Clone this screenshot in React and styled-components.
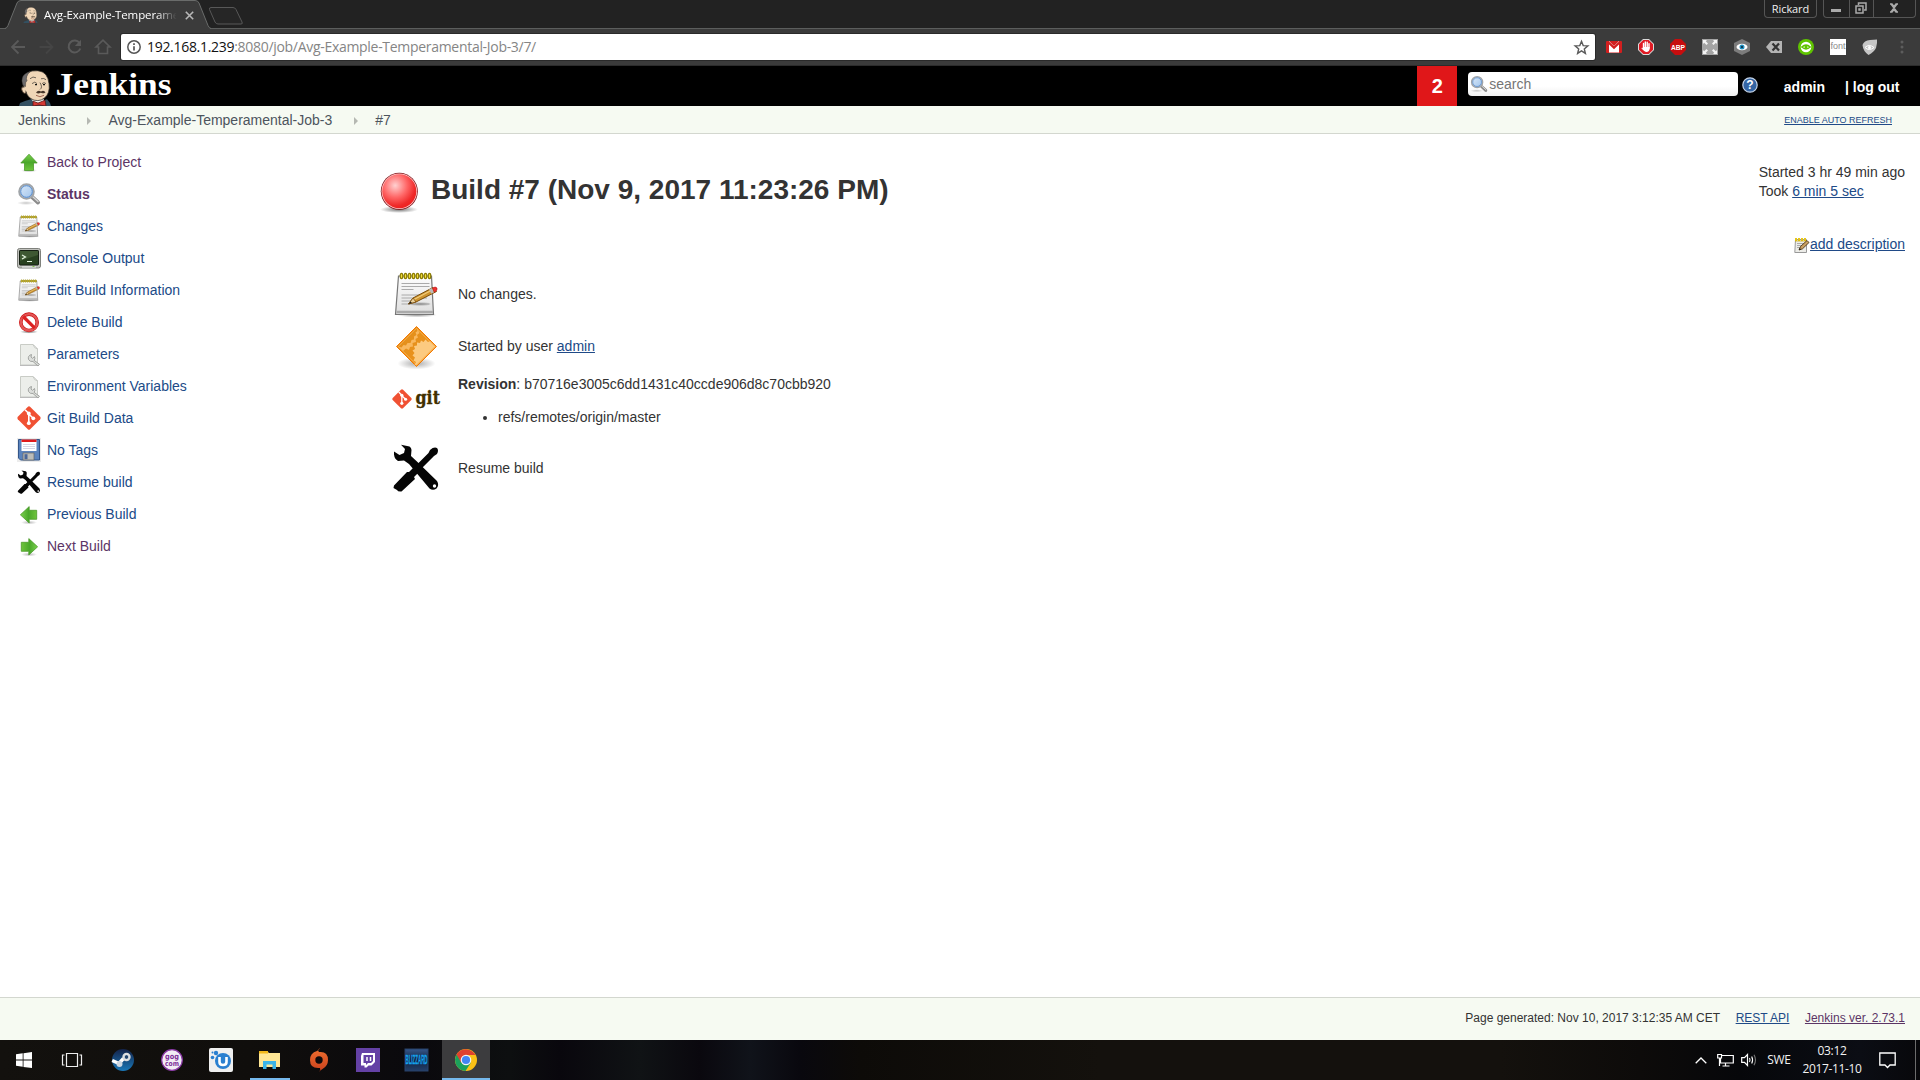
import React from "react";
import styled, { createGlobalStyle, css } from "styled-components";

const Global = createGlobalStyle`
  * { box-sizing: border-box; }
  body { margin: 0; background: #fff; overflow: hidden; }
  svg { display: block; flex: none; overflow: visible; }
`;

const uiFont = `"Open Sans", "Noto Sans", sans-serif`;
const pageFont = `"Liberation Sans", Arial, Helvetica, sans-serif`;

/* ---------- shell ---------- */

const Screen = styled.div`
  width: 1920px;
  height: 1080px;
  display: flex;
  flex-direction: column;
  background: #fff;
  color: #333;
  font: 14px ${pageFont};
`;

/* ---------- browser chrome ---------- */

const TabStrip = styled.div`
  height: 29px;
  flex: none;
  display: flex;
  align-items: flex-start;
  background: #222;
  border-bottom: 1px solid #5c5e5d;
`;
const Tab = styled.div`
  position: relative;
  width: 206px;
  height: 29px;
  margin-left: 5px;
  display: flex;
  align-items: center;
  padding: 1px 0 0 18px;
  color: #fff;
  font: 11.5px ${uiFont};
`;
const TabShape = styled.svg`
  position: absolute;
  left: 0;
  top: 0;
`;
const TabBody = styled.div`
  position: relative;
  display: flex;
  align-items: center;
`;
const TabTitle = styled.span`
  width: 134px;
  margin: 0 7px 0 6px;
  padding-bottom: 2px;
  white-space: nowrap;
  letter-spacing: -0.12px;
  mask-image: linear-gradient(90deg, #000 84%, transparent 99%);
`;
const NewTab = styled.svg`
  margin: 7px 0 0 -3px;
`;
const WindowControls = styled.div`
  display: flex;
  margin: 0 4px 0 auto;
  color: #f0f0f0;
`;
const ControlBox = styled.div`
  display: flex;
  height: 18px;
  border: 1px solid #555;
  border-top: 0;
  border-radius: 0 0 4px 4px;
  margin-left: ${(p) => p.$gap || 0}px;
`;
const UserName = styled.span`
  width: 51px;
  text-align: center;
  font: 11px/17px ${uiFont};
  letter-spacing: -0.1px;
`;
const ControlButton = styled.span`
  width: ${(p) => p.$w}px;
  display: flex;
  align-items: center;
  justify-content: center;
  padding: 0 1px 1px 0;
  & + & { border-left: 1px solid #555; }
`;
const Toolbar = styled.div`
  height: 37px;
  flex: none;
  display: flex;
  align-items: center;
  background: #3b3b3b;
  border-bottom: 1px solid #2c2c2c;
  padding: 0 10px 0 11px;
`;
const NavIcons = styled.div`
  display: flex;
  gap: 13px;
  width: 110px;
`;
const Omnibox = styled.div`
  width: 1474px;
  height: 26px;
  display: flex;
  align-items: center;
  background: #fff;
  border-radius: 2px;
  box-shadow: 0 0 0 1px #2a2a2a;
  padding: 0 6px 0 6px;
`;
const Url = styled.span`
  flex: 1;
  margin-left: 6px;
  color: #858585;
  font: 14px/20px ${uiFont};
  letter-spacing: -0.3px;
  b { font-weight: 400; color: #111; }
`;
const Extensions = styled.div`
  display: flex;
  align-items: center;
  gap: 16px;
  margin-left: 11px;
`;

/* ---------- Jenkins header ---------- */

const Header = styled.header`
  height: 40px;
  flex: none;
  display: flex;
  align-items: center;
  background: #000;
  padding: 0 20.5px 0 18px;
`;
const Alerts = styled.div`
  width: 40px;
  height: 40px;
  margin: 0 11px 0 auto;
  background: #e01719;
  color: #fff;
  font: bold 20px/40px ${pageFont};
  text-align: center;
`;
const SearchField = styled.div`
  width: 270px;
  height: 24px;
  margin-bottom: 4px;
  display: flex;
  align-items: center;
  gap: 1px;
  padding-left: 2px;
  border-radius: 4px;
  background: linear-gradient(#fff 60%, #f0f0f0);
  color: #757575;
`;
const Help = styled.div`
  margin: 0 25.5px 2px 4px;
`;
const Login = styled.div`
  display: flex;
  gap: 20px;
  padding-top: 2px;
  color: #fff;
  font-weight: bold;
`;

const Breadcrumbs = styled.nav`
  height: 28px;
  flex: none;
  display: flex;
  align-items: center;
  background: #f6faf2;
  border-bottom: 1px solid #d3d7cf;
  color: #4d545d;
  padding: 1px 28px 0 18px;
`;
const Crumb = styled.span`
  & + &::before {
    content: "";
    display: inline-block;
    margin: 0 17px 0 22px;
    border-left: 4px solid #b5b8b2;
    border-top: 4px solid transparent;
    border-bottom: 4px solid transparent;
  }
`;
const AutoRefresh = styled.a`
  margin-left: auto;
  color: #204a87;
  font-size: 9px;
  text-decoration: underline;
`;

/* ---------- page ---------- */

const Page = styled.div`
  flex: 1;
  display: flex;
  align-items: flex-start;
`;
const Tasks = styled.aside`
  width: 375px;
  padding: 12px 0 0 17px;
`;
const Task = styled.a`
  height: 32px;
  display: flex;
  align-items: center;
  gap: 6px;
  color: ${(p) => (p.$visited ? "#5c3566" : "#204a87")};
  font-weight: ${(p) => (p.$current ? "bold" : "normal")};
`;
const Main = styled.main`
  flex: 1;
  padding-top: 33px;
`;
const Title = styled.h1`
  margin: 0 0 55px;
  height: 48px;
  display: flex;
  align-items: center;
  gap: 8px;
  font: bold 28px ${pageFont};
  span { padding-bottom: 2px; }
`;
const Summary = styled.div`
  display: flex;
  flex-direction: column;
  gap: 4px;
  padding-left: 17px;
`;
const SummaryRow = styled.div`
  display: flex;
  gap: 18px;
  ${(p) =>
    p.$tall
      ? css`align-items: flex-start; height: 66px; padding-top: 1px; line-height: 18px;`
      : css`align-items: center; height: 48px;`}
`;
const Link = styled.a`
  color: ${(p) => (p.$visited ? "#5c3566" : "#204a87")};
  text-decoration: underline;
`;
const RefList = styled.ul`
  margin: 15px 0 0;
  padding-left: 40px;
`;
const Aside = styled.div`
  padding: 29px 15px 0 0;
  line-height: 19px;
`;
const AddDescription = styled.div`
  display: flex;
  justify-content: flex-end;
  align-items: center;
  margin-top: 34px;
`;
const Footer = styled.footer`
  height: 43px;
  flex: none;
  display: flex;
  justify-content: flex-end;
  align-items: center;
  gap: 15.5px;
  padding: 0 15px 2px 0;
  background: #f6faf2;
  border-top: 1px solid #d3d7cf;
  font-size: 12px;
`;

/* ---------- taskbar ---------- */

const Taskbar = styled.div`
  height: 40px;
  flex: none;
  display: flex;
  background: linear-gradient(90deg, #13110e 0, #100e0c 250px, #0a090d 420px, #0d0f10 510px, #09070d 560px, #101315 640px, #0a080e 700px, #10131a 750px, #09080e 800px, #0d0b08 860px, #14110d 1100px, #14110d 1500px, #0d0b0a 1640px, #06070a 1740px, #0b0d14 1860px, #08080b 100%);
`;
const AppButton = styled.div`
  width: ${(p) => p.$w || 49}px;
  height: 40px;
  display: flex;
  align-items: center;
  justify-content: center;
  position: relative;
  background: ${(p) => (p.$active ? "#3c3c3e" : "transparent")};
  &::after {
    content: "";
    display: ${(p) => (p.$open ? "block" : "none")};
    position: absolute;
    bottom: 0;
    left: ${(p) => (p.$active ? 0 : 2)}px;
    right: ${(p) => (p.$active ? 0 : 2)}px;
    height: 2px;
    background: #76b9ed;
  }
`;
const Tray = styled.div`
  margin-left: auto;
  display: flex;
  align-items: center;
  color: #f2f2f2;
  font: 12px/18px ${uiFont};
  letter-spacing: -0.35px;
`;
const TraySlot = styled.div`
  width: ${(p) => p.$w}px;
  text-align: center;
  display: flex;
  justify-content: center;
`;
const Clock = styled.div`
  width: 60px;
  margin-left: 5px;
  white-space: nowrap;
  text-align: center;
  line-height: 18px;
`;
const ActionCenter = styled.div`
  width: 53px;
  padding-left: 17px;
`;
const ShowDesktop = styled.div`
  width: 5px;
  height: 40px;
  border-left: 1px solid #6c6c6c;
`;

/* ---------- drawings ---------- */

const Butler = ({ w, h }) => (
  <svg width={w} height={h} viewBox="0 0 34 37" preserveAspectRatio="none">
    <path d="M1 37 L2 34 Q8 31 13 30 L20 33 L29 30 L32 34 L33 37Z" fill="#335061" />
    <path d="M13 29 L17 36 L25 36 L26 30Z" fill="#f7f7f7" />
    <path d="M6 18 Q2 4 14 1 Q27 -1 30 9 Q33 20 29 26 Q24 33 16 31 Q9 28 8 22 Q4 22 4 18Z" fill="#f0d6b7" stroke="#36312c" strokeWidth=".8" />
    <path d="M5 16 Q1 5 12 1.5 Q7 7 9 11 Q7 12 7.500 17Z" fill="#6d6b6d" stroke="#36312c" strokeWidth=".5" />
    <path d="M5 17 Q2 19 5 23 Q7 25 8 23" fill="#f0d6b7" stroke="#49372a" strokeWidth=".8" />
    <path d="M12 9 Q15 6 18 8 M23 9 Q26 8 28 10 M14 14 Q17 11 19 14 M24 14 Q26 12 28 14 M22 13 Q25 18 22 20" fill="none" stroke="#36312c" strokeWidth=".7" />
    <path d="M17 15h2 M25 15h2" stroke="#111" strokeWidth="1.100" />
    <path d="M18 23 Q20 20.500 23 22 Q26 20.500 27.500 23 Q25 24.500 22.500 23.500 Q20 25 18 23Z" fill="#49372a" />
    <path d="M18 26 Q22 29 26 26" stroke="#8e4b3a" fill="none" strokeWidth=".8" />
    <path d="M15 32 L20 34 L27 31 L28 37 L21 36 L15 37Z" fill="#d33833" stroke="#5b1614" strokeWidth=".8" />
  </svg>
);

const JenkinsLogo = () => (
  <svg width="156" height="40" viewBox="0 0 156 40">
    <g transform="translate(0 4)"><Butler w={34} h={36} /></g>
    <text x="37.500" y="28.500" fill="#fff" fontFamily="'Liberation Serif', Georgia, serif" fontWeight="bold" fontSize="30.500" textLength="116" lengthAdjust="spacingAndGlyphs">Jenkins</text>
  </svg>
);

const Defs = () => (
  <svg width="0" height="0" style={{ position: "absolute" }}>
    <defs>
      <radialGradient id="ball" cx=".38" cy=".33" r=".7">
        <stop offset="0" stopColor="#ffd0d0" /><stop offset=".5" stopColor="#f66" /><stop offset=".85" stopColor="#ef2929" /><stop offset="1" stopColor="#ef2020" />
      </radialGradient>
      <radialGradient id="shade"><stop offset="0" stopColor="#000" stopOpacity=".55" /><stop offset="1" stopColor="#000" stopOpacity="0" /></radialGradient>
      <linearGradient id="green" x2="0" y2="1"><stop offset="0" stopColor="#7bd14e" /><stop offset=".5" stopColor="#4aa82a" /><stop offset="1" stopColor="#6fc43c" /></linearGradient>
      <linearGradient id="paper" x2="0" y2="1"><stop offset="0" stopColor="#fdfdfd" /><stop offset="1" stopColor="#dedede" /></linearGradient>
      <linearGradient id="lens" x2="1" y2="1"><stop offset="0" stopColor="#dcebfa" /><stop offset="1" stopColor="#9dc1ea" /></linearGradient>
      <linearGradient id="orange" x2="1" y2="1"><stop offset="0" stopColor="#e08e1b" /><stop offset="1" stopColor="#f0951e" /></linearGradient>
      <linearGradient id="steam" x2="0" y2="1"><stop offset="0" stopColor="#14234a" /><stop offset="1" stopColor="#1a78b8" /></linearGradient>
      <linearGradient id="origin" x2="0" y2="1"><stop offset="0" stopColor="#f07030" /><stop offset="1" stopColor="#c8401c" /></linearGradient>
      <linearGradient id="bliz" x2="0" y2="1"><stop offset="0" stopColor="#35588c" /><stop offset=".5" stopColor="#12233f" /><stop offset="1" stopColor="#24406b" /></linearGradient>
    </defs>
  </svg>
);

const Arrow = ({ turn }) => (
  <svg width="24" height="24" viewBox="0 0 24 24">
    <ellipse cx="12" cy="20.500" rx="8" ry="2" fill="url(#shade)" opacity=".5" />
    <path d="M12 4.200 L20.200 13 H16.500 V20.500 H7.500 V13 H3.800Z" fill="url(#green)" stroke="#4b9a2a" strokeWidth=".8" transform={`rotate(${turn} 12 12.8)`} />
  </svg>
);

const Magnifier = ({ size = 24 }) => (
  <svg width={size} height={size} viewBox="0 0 24 24">
    <ellipse cx="9" cy="21" rx="9" ry="2" fill="url(#shade)" opacity=".4" />
    <path d="M14 14 L21 20.500" stroke="#8b8b8b" strokeWidth="4" strokeLinecap="round" />
    <path d="M15.500 14.500 L21 19.500" stroke="#d8d8d8" strokeWidth="1.300" strokeLinecap="round" />
    <circle cx="9.500" cy="9.500" r="7.300" fill="url(#lens)" stroke="#a0a4a8" strokeWidth="2" />
    <circle cx="9.500" cy="9.500" r="5.800" fill="none" stroke="#4d86cc" strokeWidth=".9" />
  </svg>
);

const Notebook = ({ size = 24 }) => (
  <svg width={size} height={size} viewBox="-1 0 48 48">
    <ellipse cx="24" cy="45" rx="20" ry="2.500" fill="url(#shade)" opacity=".7" />
    <path d="M5.500 6 H38.500 L40.500 44.500 H2.500Z" fill="url(#paper)" stroke="#777" strokeWidth="1.200" />
    <path d="M3.500 42 H40" stroke="#aaa" strokeWidth="2.500" />
    <path d="M8.500 13.500H36.500 M8.500 16.500H36.500 M8.500 19.500H20.500 M8.500 25H36 M8.500 28H34 M8.500 31H20 M8.500 34H36.500" stroke="#aaa" strokeWidth="1" />
    {[0, 1, 2, 3, 4, 5, 6, 7].map((i) => (
      <ellipse key={i} cx={8.5 + i * 4} cy="6" rx="1.300" ry="2.700" fill="#f6e03a" stroke="#8a7a00" strokeWidth="1.200" />
    ))}
    <ellipse cx="27" cy="34" rx="12" ry="2.500" fill="url(#shade)" opacity=".5" />
    <path d="M15.500 34 L20 28 L40 17.500 L43.500 21.500 L23 32Z" fill="#cf9530" stroke="#7a4d0b" strokeWidth="1" />
    <path d="M20 30 L39 20" stroke="#f2cd7c" strokeWidth="1.300" />
    <path d="M15.500 34 L20 28 L23 32Z" fill="#e9cf9a" stroke="#7a4d0b" strokeWidth=".8" />
    <path d="M15.500 34 L17.500 31.500 L19 33Z" fill="#222" />
    <path d="M36 19.500 L39 18 L41 22.300 L38.500 23.700Z" fill="#bbb" />
    <path d="M39.500 18 Q42.500 16 44 18 Q45 20.500 41.200 22.300Z" fill="#e33" stroke="#a11" strokeWidth=".5" />
  </svg>
);

const NotePad = () => (
  <svg width="16" height="16" viewBox="0 0 16 16">
    <path d="M1.500 2.500H12.500V15.500H.8Z" fill="#ecece8" stroke="#999" />
    <path d="M3 6.500h8M3 8.500h5M3 10.500h4" stroke="#aaa" />
    <path d="M1 1h2v3h-2zM4 1h2v3h-2zM7 1h2v3h-2zM10 1h2v3h-2z" fill="#e6c619" />
    <path d="M1 4 H13" stroke="#c9a800" strokeWidth=".7" />
    <path d="M5 13 L6.500 9.500 L13 3.500 L15 5.500 L8.500 11.800Z" fill="#c9a063" stroke="#4b3413" strokeWidth=".9" />
    <path d="M5 13l.7-1.800 1.300 1z" fill="#111" />
  </svg>
);

const Terminal = () => (
  <svg width="24" height="24" viewBox="0 0 24 24">
    <rect x=".5" y="2.500" width="23" height="19.500" rx="2" fill="#c0c1bd" stroke="#7f817c" />
    <rect x="2.500" y="4.500" width="19" height="14.500" rx=".6" fill="#28401f" stroke="#151f12" />
    <path d="M3 5h18v4L3 15z" fill="#47623b" opacity=".7" />
    <path d="M5 9l3.500 2L5 13M10 15.500h5" stroke="#e5f5e0" strokeWidth="1.200" fill="none" />
    <path d="M5 21h14" stroke="#eee" />
    <path d="M15.500 20.500h2" stroke="#7bc043" />
  </svg>
);

const NoEntry = () => (
  <svg width="24" height="24" viewBox="0 0 24 24">
    <ellipse cx="12" cy="21.800" rx="9" ry="1.800" fill="url(#shade)" />
    <circle cx="12" cy="12.300" r="8.200" fill="#fff" stroke="#c11" strokeWidth="3.600" />
    <circle cx="12" cy="12.300" r="8.200" fill="none" stroke="#e25555" strokeWidth="2.400" />
    <path d="M6.200 6.500 L17.800 18.100" stroke="#d22" strokeWidth="3.200" />
  </svg>
);

const Document = () => (
  <svg width="24" height="24" viewBox="0 0 24 24">
    <path d="M3.500 2.500 H16 L20.500 7 V23 H3.500Z" fill="#eceeea" stroke="#c9ccc6" />
    <path d="M16 2.500 Q17 6.500 20.500 7Z" fill="#fff" stroke="#bfc2bc" strokeWidth=".8" />
    <path d="M3 23.500H20" stroke="#bbb" />
    <path d="M11.500 17.500 Q10.500 13.500 14.500 12.500 L14 15 L15.500 16.300 L17.500 14.500 Q18.500 17.200 17 18.300 L22.500 22.300 L21 24 L16 19.500 Q13 20 11.500 17.500Z" fill="#dcdedb" stroke="#9a9c98" strokeWidth=".9" />
  </svg>
);

const GitMark = ({ size = 24 }) => (
  <svg width={size} height={size} viewBox="0 0 24 24">
    <path d="M12 .3 Q12.700 .3 13.300 .9 L23.200 10.800 Q24.200 12 23.200 13.200 L13.200 23.200 Q12 24.200 10.800 23.200 L.8 13.200 Q-.2 12 .8 10.800 L10.700 .9 Q11.300 .3 12 .3Z" fill="#f05133" />
    <path d="M8 3.700 L11.800 7.500 V17 M12 8.200 L16.200 12.300" stroke="#fff" strokeWidth="1.600" fill="none" />
    <circle cx="11.800" cy="7.500" r="1.900" fill="#fff" /><circle cx="11.800" cy="17.200" r="1.900" fill="#fff" /><circle cx="16.300" cy="12.300" r="1.900" fill="#fff" />
  </svg>
);

const GitLogo = () => (
  <svg width="48" height="48" viewBox="0 0 48 48">
    <g transform="translate(0 14)"><GitMark size={20} /></g>
    <text x="23.500" y="28.500" fill="#413000" stroke="#413000" strokeWidth=".3" fontFamily="'DejaVu Serif', serif" fontWeight="bold" fontSize="18" textLength="24.500" lengthAdjust="spacingAndGlyphs">git</text>
  </svg>
);

const Floppy = () => (
  <svg width="24" height="24" viewBox="0 0 24 24">
    <rect width="24" height="24" fill="#ececec" />
    <path d="M1.500 1.500H22.500V22H3.500L1.500 20Z" fill="#5b84bd" stroke="#33568a" />
    <rect x="4.500" y="1.500" width="15" height="11.500" fill="#fff" />
    <rect x="4.500" y="1.500" width="15" height="2.500" fill="#e01b1b" />
    <path d="M6 6.500h12M6 8.500h12M6 10.500h12" stroke="#ccd" strokeWidth=".8" />
    <rect x="6" y="15" width="11" height="7" fill="#bcbdb9" stroke="#666" strokeWidth=".7" />
    <rect x="7.500" y="16.200" width="3" height="5" fill="#4a6798" />
  </svg>
);

const Tools = ({ size = 24 }) => (
  <svg width={size} height={size} viewBox="0 0 48 48">
    <path d="M9 .8 L17.500 2.500 Q19.500 3.500 19.500 6 L19 12 L26 18.500 L45 37 Q47.500 41 44.500 44.500 Q41 47 37.500 44.500 L17 20 L12 16.500 L6 17 Q2.500 15 2 10.500 L2 7.500 L7.500 11 L12 9 L13 5 Z" fill="#050505" />
    <path d="M23 22.500 L36.500 9 L38 6 Q42 2.500 45 4 Q47 6.500 45 10 L42 12 L28 26Z" fill="#050505" />
    <path d="M23 22 L28 27 L22 33 L23 35 L9.500 47.500 Q6 48 5 46 L1.500 44 L2 41.500 L15 28 L17 28Z" fill="#050505" />
    <circle cx="42.500" cy="42" r="1.700" fill="#fff" />
  </svg>
);

const Ball = () => (
  <svg width="48" height="48" viewBox="0 0 48 48">
    <ellipse cx="24" cy="42.500" rx="19" ry="3.500" fill="url(#shade)" />
    <circle cx="24.300" cy="24.300" r="18.500" fill="#7e1116" />
    <circle cx="24.300" cy="24.300" r="17.800" fill="#ffc9c9" />
    <circle cx="24.300" cy="24.300" r="17" fill="url(#ball)" />
  </svg>
);

const OrangeDiamond = () => (
  <svg width="48" height="48" viewBox="0 0 48 48">
    <ellipse cx="24.500" cy="41.500" rx="19" ry="6" fill="url(#shade)" opacity=".6" />
    <path d="M24.500 4.500 L44.500 24.500 L24.500 44.500 L4.500 24.500Z" fill="url(#orange)" stroke="#f57900" strokeWidth="1" />
    <path d="M22.500 42.500 L24 40 L21.500 38.500 L23 35.500 L20.500 33.500 L22.500 31 L20.500 28.500 L23 27 L22 24 L25 23.500 L25 20.500 L28 21 L29 18.500 L31.500 20 L33.500 17.500 L36 20 L38 19 L43.500 24.500 L24.500 43.500Z" fill="#fcca80" />
    <path d="M24.500 5.500 L25.500 9 L23.500 10.500 L24.500 13 L22 14.500 L22 17.500 L19.500 18 L18.500 21 L15.500 21 L14 23.500 L11.500 23 L9.500 25.500 L6 24.500 L11 29 L14 26.500 L17 28 L18 25 L21 24.500 L20.500 21 L24 20 L23.500 17 L26 15.500 L25 13 L27.500 11 L26 8Z" fill="#f9b85e" />
    <path d="M24.500 6.300 L42.700 24.500 L24.500 42.700 L6.300 24.500Z" fill="none" stroke="#fbb85c" strokeWidth=".7" />
  </svg>
);

const HelpIcon = () => (
  <svg width="16" height="16" viewBox="0 0 16 16">
    <circle cx="8" cy="8" r="7.200" fill="#3465a4" stroke="#c6d5ea" strokeWidth="1.200" />
    <text x="8" y="12.300" textAnchor="middle" fill="#fff" fontFamily="'Liberation Sans', sans-serif" fontWeight="bold" fontSize="12">?</text>
  </svg>
);

const ext = [
  <g key="g"><rect y="2" width="16" height="12" rx="1" fill="#d21f1f" /><path d="M3 2 L8 7 L13 2 V13.500H3Z" fill="#fff" /><path d="M2 3 L8 8.800 L14 3" fill="none" stroke="#d21f1f" strokeWidth="2.200" /></g>,
  <g key="h"><path d="M5 0h6l5 5v6l-5 5H5l-5-5V5z" fill="#dadada" /><path d="M5.300 1h5.400L15 5.300v5.400L10.700 15H5.300L1 10.700V5.300z" fill="#e01b24" /><path d="M5.500 9V4.500M7.300 8V3M9.200 8V3.300M11 9V4.800" stroke="#fff" strokeWidth="1.400" strokeLinecap="round" /><path d="M4.800 8H11.700V10Q11 13 8.500 13Q6.500 13 3.300 9.300L4 8.800L5 9.500Z" fill="#fff" /></g>,
  <g key="a"><path d="M5 0h6l5 5v6l-5 5H5l-5-5V5z" fill="#c70d0e" /><text x="8" y="10.800" textAnchor="middle" fill="#fff" fontFamily="'Liberation Sans', sans-serif" fontWeight="bold" fontSize="7.800" textLength="14" lengthAdjust="spacingAndGlyphs">ABP</text></g>,
  <g key="f"><rect width="16" height="16" fill="#a4a4a4" /><path d="M1 5V1h4L3.800 2.200 6 4.500 4.500 6 2.200 3.800zM15 5V1h-4l1.200 1.200L10 4.500 11.500 6l2.300-2.200zM1 11v4h4l-1.200-1.200L6 11.500 4.500 10l-2.300 2.200zM15 11v4h-4l1.200-1.200-2.200-2.300 1.500-1.500 2.300 2.200z" fill="#f4f4f4" /></g>,
  <g key="e"><path d="M8 0l8 4v8l-8 4-8-4V4z" fill="#7c7c7c" /><ellipse cx="8" cy="8" rx="5.500" ry="3.200" fill="#fff" /><circle cx="8" cy="8" r="2.500" fill="#1f8fc0" /><circle cx="8" cy="8" r="1" fill="#123" /></g>,
  <g key="x"><path d="M5 2H16V14H5L0 8z" fill="#b4b4b4" /><path d="M6.500 4.500l6.500 7M13 4.500l-6.500 7" stroke="#333" strokeWidth="2.200" /></g>,
  <g key="v"><circle cx="8" cy="8" r="8" fill="#5fc400" /><circle cx="8" cy="8" r="5.300" fill="#fff" /><path d="M3.800 8Q8 4.200 12.200 8Q8 11.800 3.800 8Z" fill="none" stroke="#5fc400" strokeWidth="1.500" /><circle cx="8" cy="8" r="1.500" fill="#5fc400" /></g>,
  <g key="t"><rect width="16" height="16" fill="#fff" /><text x=".5" y="10" fill="#888" fontFamily="'Liberation Sans', sans-serif" fontSize="8.500" textLength="15" lengthAdjust="spacingAndGlyphs">font</text></g>,
  <g key="s"><path d="M.5 6Q2 1.500 8 1Q12 .5 15 .5Q15.500 4 14 9Q12 13 6.500 16Q1 12 .5 6Z" fill="#c6c6c6" /><path d="M3 8.500Q7 4.500 12 8.500Q7 12.500 3 8.500Z" fill="none" stroke="#fff" /><circle cx="7.500" cy="8.500" r="1.500" fill="#fff" /></g>,
];

const tasks = [
  ["Back to Project", <Arrow turn={0} />, true],
  ["Status", <Magnifier />, true, true],
  ["Changes", <Notebook />],
  ["Console Output", <Terminal />],
  ["Edit Build Information", <Notebook />],
  ["Delete Build", <NoEntry />],
  ["Parameters", <Document />],
  ["Environment Variables", <Document />],
  ["Git Build Data", <GitMark />],
  ["No Tags", <Floppy />],
  ["Resume build", <Tools />],
  ["Previous Build", <Arrow turn={-90} />],
  ["Next Build", <Arrow turn={90} />, true],
];

const apps = [
  { w: 48, art: <path d="M4 6.300 L10.700 5.300 V11.600 H4Z M11.500 5.200 L20 4 V11.600 H11.500Z M4 12.400 H10.700 V18.800 L4 17.800Z M11.500 12.400 H20 V20 L11.500 18.900Z" fill="#fff" /> },
  { w: 48, art: <path d="M6.500 5.500h11v13h-11zM4.500 7h-2v10h2M19.500 7h2v10h-2" fill="none" stroke="#eee" strokeWidth="1.200" /> },
  { w: 54, art: <g><circle cx="12" cy="12" r="11" fill="url(#steam)" /><path d="M1.200 12.500 L8 15.500 L12.500 10.500" stroke="#fff" strokeWidth="3.500" fill="none" /><circle cx="15.500" cy="9" r="4.200" fill="#ddd" /><circle cx="15.500" cy="9" r="2.300" fill="#24466f" stroke="#fff" strokeWidth=".7" /><circle cx="8.500" cy="16" r="3" fill="#cfd8e2" /></g> },
  { w: 44, art: <g><circle cx="12" cy="12" r="10.300" fill="#f2ecf5" stroke="#8c3ba8" strokeWidth="1.200" /><text x="12" y="11" textAnchor="middle" fontFamily="'DejaVu Sans', sans-serif" fontWeight="bold" fontSize="7.500" fill="#7d2f99" textLength="14" lengthAdjust="spacingAndGlyphs">gog</text><text x="12" y="17.500" textAnchor="middle" fontFamily="'DejaVu Sans', sans-serif" fontWeight="bold" fontSize="7" fill="#7d2f99" textLength="14" lengthAdjust="spacingAndGlyphs">com</text></g> },
  { w: 54, art: <g><rect width="24" height="24" rx="2" fill="#efefef" /><circle cx="14" cy="13" r="8" fill="#2a7fd0" /><path d="M10.500 9v5q0 3 3.500 3t3.500-3V9" stroke="#fff" strokeWidth="2.600" fill="none" /><circle cx="3.500" cy="9.500" r="1.800" fill="#2a7fd0" /><circle cx="7" cy="5" r="2.200" fill="#2a7fd0" /><circle cx="3.500" cy="4.500" r="1" fill="#2a7fd0" /></g> },
  { w: 44, open: true, art: <g><path d="M1 3H9L11 5H22V19H1Z" fill="#ffe694" /><path d="M1 3h9v2.500H1z" fill="#f2b81b" /><path d="M5 21V13H18V21H14.500V16.500H8.500V21Z" fill="#3bb4e8" /></g> },
  { w: 54, art: <g><path d="M12 24 Q14 22 13 20 Q3 21 3 12 Q3 5 10 3 Q12 2 13 0 Q10 2 12 4 Q21 3 21 12 Q21 18 15.500 21 Q13.500 22 12 24Z" fill="url(#origin)" /><circle cx="12" cy="12" r="3.700" fill="#0d0a0c" /></g> },
  { w: 44, art: <g><rect width="24" height="24" fill="#6441a5" /><path d="M6 5H19V14L15.500 17.500H12.500L10.500 19.500H8.500V17.500H5V8Z" fill="#fff" /><path d="M7.500 7H17V13L15 15H12L10 17V15H7.500Z" fill="#6441a5" /><path d="M11 9v4M14.500 9v4" stroke="#fff" strokeWidth="1.500" /></g> },
  { w: 52, art: <g><rect x="1" y="1" width="23" height="22" fill="url(#bliz)" stroke="#29436b" /><text x="12.500" y="16" textAnchor="middle" fontFamily="'Liberation Sans', sans-serif" fontWeight="bold" fontSize="12" fill="#14a4ec" stroke="#14a4ec" strokeWidth=".3" textLength="22" lengthAdjust="spacingAndGlyphs">BLIZZARD</text></g> },
  { w: 48, open: true, active: true, art: <g><circle cx="12" cy="12" r="11" fill="#fbc116" /><path d="M12 12 L2.500 6.500 A11 11 0 0 0 11.500 23 L16.800 14.800Z" fill="#1ba15c" /><path d="M12 12 L7.200 14.800 L2.500 6.500 A11 11 0 0 1 21.500 7 H12Z" fill="#e0412f" /><circle cx="12" cy="12" r="5.300" fill="#f4f4f4" /><circle cx="12" cy="12" r="4.100" fill="#4285f4" /></g> },
];

export default function App() {
  return (
    <Screen>
      <Global />
      <Defs />
      <TabStrip>
        <Tab>
          <TabShape width="207" height="29" viewBox="0 0 207 29">
            <path d="M0 29 Q2 28 3 25.500 L12 3 Q13 .5 16 .5 H190 Q193 .5 194 3 L203 25.500 Q204 28 206 29Z" fill="#3b3b3b" />
            <path d="M0 28.500 Q2 28 3 25.500 L12 3 Q13 .5 16 .5 H190 Q193 .5 194 3 L203 25.500 Q204 28 206 28.500" fill="none" stroke="#6a6c6b" />
          </TabShape>
          <TabBody>
            <Butler w={15} h={16} />
            <TabTitle>Avg-Example-Temperame</TabTitle>
            <svg width="9" height="9" viewBox="0 0 9 9"><path d="M.8 .8l7.400 7.400M8.200 .8L.8 8.200" stroke="#b8b8b8" strokeWidth="1.600" /></svg>
          </TabBody>
        </Tab>
        <NewTab width="36" height="18" viewBox="0 0 36 18">
          <path d="M3 .5H25Q27 .5 28 2.500L34 15Q35 17 33 17H10Q8 17 7 15L1.500 2.500Q1 .5 3 .5Z" fill="#262626" stroke="#585858" />
        </NewTab>
        <WindowControls>
          <ControlBox><UserName>Rickard</UserName></ControlBox>
          <ControlBox $gap={6}>
            <ControlButton $w={25}><svg width="10" height="14"><rect y="8" width="10" height="3" fill="#aaa" /></svg></ControlButton>
            <ControlButton $w={24}><svg width="12" height="12" viewBox="0 0 12 12"><path d="M3.500 3V1H11V8H9M1 4h7v7H1zM4 7h1v1H4z" fill="none" stroke="#aaa" strokeWidth="1.500" /></svg></ControlButton>
            <ControlButton $w={42}><svg width="10" height="10" viewBox="0 0 10 10"><path d="M1 1h2L5 3.500 7 1h2M1 9h2l2-2.500L7 9h2M2 1l6 8M8 1L2 9" fill="none" stroke="#aaa" strokeWidth="1.400" /></svg></ControlButton>
          </ControlBox>
        </WindowControls>
      </TabStrip>

      <Toolbar>
        <NavIcons>
          <svg width="15" height="16" viewBox="0 0 15 16"><path d="M14 8H1.500M7.500 1.500L1 8L7.500 14.500" fill="none" stroke="#5a5a5a" strokeWidth="1.800" /></svg>
          <svg width="15" height="16" viewBox="0 0 15 16"><path d="M.5 8H13M7 1.500L13.500 8L7 14.500" fill="none" stroke="#454545" strokeWidth="1.800" /></svg>
          <svg width="15" height="16" viewBox="0 0 15 16"><path d="M12.500 4A6 6 0 1 0 13.300 9.500" fill="none" stroke="#5a5a5a" strokeWidth="2" /><path d="M14 .8V7H7.800Z" fill="#5a5a5a" /></svg>
          <svg width="16" height="16" viewBox="0 0 16 16"><path d="M3.500 14.500V8H1L8 1.200L15 8H12.500V14.500Z" fill="none" stroke="#5a5a5a" strokeWidth="1.600" /></svg>
        </NavIcons>
        <Omnibox>
          <svg width="14" height="14" viewBox="0 0 14 14"><circle cx="7" cy="7" r="6.200" fill="none" stroke="#555" strokeWidth="1.500" /><path d="M7 6.200V10.500M7 3.300V5" stroke="#555" strokeWidth="1.700" /></svg>
          <Url><b>192.168.1.239</b>:8080/job/Avg-Example-Temperamental-Job-3/7/</Url>
          <svg width="15" height="15" viewBox="0 0 15 15"><path d="M7.500 1.300L9.200 5.600L13.900 5.900L10.300 8.900L11.400 13.400L7.500 10.900L3.600 13.400L4.700 8.900L1.100 5.900L5.800 5.600Z" fill="none" stroke="#5a5a5a" strokeWidth="1.400" /></svg>
        </Omnibox>
        <Extensions>
          {ext.map((art, i) => <svg key={i} width="16" height="16" viewBox="0 0 16 16">{art}</svg>)}
          <svg width="16" height="16" viewBox="0 0 16 16"><circle cx="8" cy="3" r="1.500" fill="#5d5d5d" /><circle cx="8" cy="8" r="1.500" fill="#5d5d5d" /><circle cx="8" cy="13" r="1.500" fill="#5d5d5d" /></svg>
        </Extensions>
      </Toolbar>

      <Header>
        <JenkinsLogo />
        <Alerts>2</Alerts>
        <SearchField><Magnifier size={18} />search</SearchField>
        <Help><HelpIcon /></Help>
        <Login><span>admin</span><span>| log out</span></Login>
      </Header>
      <Breadcrumbs>
        <Crumb>Jenkins</Crumb>
        <Crumb>Avg-Example-Temperamental-Job-3</Crumb>
        <Crumb>#7</Crumb>
        <AutoRefresh>ENABLE AUTO REFRESH</AutoRefresh>
      </Breadcrumbs>

      <Page>
        <Tasks>
          {tasks.map(([label, icon, visited, current]) => (
            <Task key={label} $visited={visited} $current={current}>{icon}{label}</Task>
          ))}
        </Tasks>
        <Main>
          <Title><Ball /><span>Build #7 (Nov 9, 2017 11:23:26 PM)</span></Title>
          <Summary>
            <SummaryRow><Notebook size={48} />No changes.</SummaryRow>
            <SummaryRow><OrangeDiamond /><span>Started by user <Link>admin</Link></span></SummaryRow>
            <SummaryRow $tall>
              <GitLogo />
              <div>
                <b>Revision</b>: b70716e3005c6dd1431c40ccde906d8c70cbb920
                <RefList><li>refs/remotes/origin/master</li></RefList>
              </div>
            </SummaryRow>
            <SummaryRow><Tools size={48} />Resume build</SummaryRow>
          </Summary>
        </Main>
        <Aside>
          Started 3 hr 49 min ago<br />Took <Link>6 min 5 sec</Link>
          <AddDescription><NotePad /><Link>add description</Link></AddDescription>
        </Aside>
      </Page>
      <Footer>
        <span>Page generated: Nov 10, 2017 3:12:35 AM CET</span>
        <Link>REST API</Link>
        <Link $visited>Jenkins ver. 2.73.1</Link>
      </Footer>

      <Taskbar>
        {apps.map((a, i) => (
          <AppButton key={i} $w={a.w} $open={a.open} $active={a.active}>
            <svg width="24" height="24" viewBox="0 0 24 24">{a.art}</svg>
          </AppButton>
        ))}
        <Tray>
          <TraySlot $w={24}><svg width="12" height="7" viewBox="0 0 12 7"><path d="M.7 6.300L6 1L11.300 6.300" fill="none" stroke="#fff" strokeWidth="1.300" /></svg></TraySlot>
          <TraySlot $w={24}><svg width="17" height="14" viewBox="0 0 17 14"><path d="M5 2.500H16.300V10H3.500V5.500M.7 1.500H4.500V5H.7ZM2.500 5V13M8.500 10V13M5.500 13H12.500" fill="none" stroke="#fff" strokeWidth="1.200" /></svg></TraySlot>
          <TraySlot $w={24}><svg width="16" height="14" viewBox="0 0 16 14"><path d="M.7 4.700H3.500L6.500 1.500V12.500L3.500 9.300H.7Z" fill="none" stroke="#fff" strokeWidth="1.200" /><path d="M8.500 5Q9.500 7 8.500 9M10.700 3.500Q12.500 7 10.700 10.500" fill="none" stroke="#fff" strokeWidth="1.100" /><path d="M13 1.800Q16 7 13 12.200" fill="none" stroke="#777" strokeWidth="1.100" /></svg></TraySlot>
          <TraySlot $w={36}>SWE</TraySlot>
          <Clock>03:12<br />2017-11-10</Clock>
          <ActionCenter><svg width="17" height="17" viewBox="0 0 17 17"><path d="M.8 1H16.200V13H11L8.500 15.500L6 13H.8Z" fill="none" stroke="#fff" strokeWidth="1.300" /></svg></ActionCenter>
          <ShowDesktop />
        </Tray>
      </Taskbar>
    </Screen>
  );
}
